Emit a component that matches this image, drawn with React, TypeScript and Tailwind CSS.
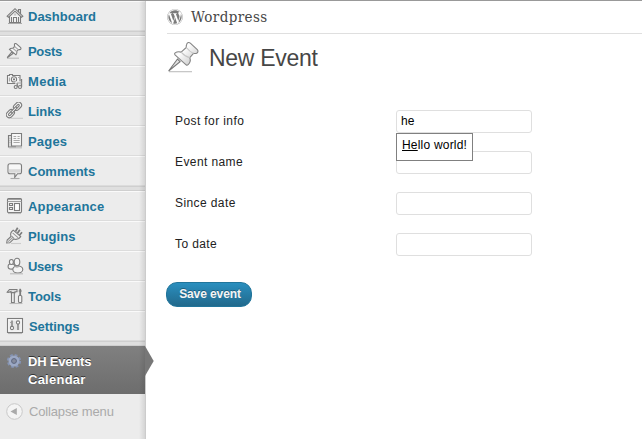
import React from "react";
import { FaWordpress } from "react-icons/fa";

type IconProps = { className?: string };

const svgProps = {
  width: 18,
  height: 18,
  viewBox: "0 0 18 18",
  fill: "none",
  stroke: "#7c7c7c",
  strokeWidth: 1.1,
};

const HomeIcon = () => (
  <svg {...svgProps}>
    <path d="M3.5 9v6.5h11V9" fill="#f6f6f6" />
    <path d="M12.5 5V2.5h2V7" fill="#ddd" />
    <path d="M1.2 9.2 9 1.7l7.8 7.5-1.3 1L9 4.2l-6.5 6z" fill="#eee" />
    <path d="M7.5 15.5v-5h3v5M5.5 10v5M12.5 10v5" />
    <path d="M9 6.5v2M2 16.5h14" stroke="#aaa" />
  </svg>
);

const PinIcon = () => (
  <svg {...svgProps}>
    <path d="M1 16.2h12" stroke="#bbb" />
    <path d="M1.2 15.7 5.7 10l1.4 1.4z" fill="#ddd" />
    <path
      d="M8.4 2.6c.2-1 1-1.4 1.8-.9l4.5 4c.6.8.2 1.8-1 1.9l-1.4.1-1.6 1.8c.5 1.3.2 2.6-.7 3.3L3.5 7.4c.8-1 2-1.3 3.3-1.1l1.8-1.8z"
      fill="#f5f5f5"
    />
    <path d="m6.8 6.3 3.9 3.2M8.6 4.5l3.7 3.2" stroke="#aaa" />
  </svg>
);

const MediaIcon = () => (
  <svg {...svgProps}>
    <path d="M1.5 3.5h2v-1h3v1h7.5v8h-12.5z" fill="#f4f4f4" />
    <path d="M3.5 5.5v4M12 5.5h1.5" stroke="#aaa" />
    <circle cx="8" cy="7.4" r="2.6" fill="#fff" />
    <circle cx="8" cy="7.4" r=".6" />
    <path d="M10.5 15.5v-5h5.5v5" fill="#ececec" stroke="#ececec" strokeWidth="2.4" />
    <path d="M11.2 15v-4M15.5 15V7" strokeWidth="1.3" />
    <path d="M11 11h4.5" stroke="#aaa" />
    <circle cx="9.7" cy="15" r="1.5" fill="#eee" />
    <circle cx="14" cy="15" r="1.5" fill="#eee" />
  </svg>
);

const LinksIcon = () => (
  <svg {...svgProps}>
    <path d="M5 16.3h12" stroke="#ccc" />
    <g transform="translate(-.8 -.8) rotate(-46 8.5 9)">
      <rect x="-.8" y="6" width="9" height="6" rx="3" fill="#f4f4f4" />
      <rect x="1.4" y="8" width="4.8" height="2" rx="1" />
      <rect x="9.5" y="6" width="9" height="6" rx="3" fill="#f4f4f4" />
      <rect x="11.3" y="8" width="4.8" height="2" rx="1" />
      <rect x="5" y="8" width="7.5" height="2" rx="1" fill="#fff" />
    </g>
  </svg>
);

const PagesIcon = () => (
  <svg {...svgProps}>
    <path d="M6 3.5H2.5v11.5H10" fill="#ddd" />
    <path d="M5.5 1.5h10v12.5h-10z" fill="#f7f7f7" />
    <path
      d="M7.5 4.5h2.7M11.5 4.5h2.2M7.5 6.5h2.7M11.5 6.5h2.2M7.5 8.5h6.2M7.5 10.5h6.2M3.5 6.5h1M3.5 8.5h1M3.5 10.5h1"
      stroke="#aaa"
    />
    <path d="M3 15.8h13" stroke="#bbb" />
  </svg>
);

const CommentIcon = () => (
  <svg {...svgProps}>
    <path
      d="M4 1.7h9.5c1.2 0 2 .9 2 2v6c0 1.2-.8 2-2 2H11.5l-2.8 3.8.2-3.8H4c-1.2 0-2-.8-2-2v-6c0-1.2.8-2 2-2z"
      fill="#f7f7f7"
    />
    <path d="M2.8 7.2h12v3.5h-12z" fill="#d8d8d8" stroke="none" />
    <path d="M4.5 16.5h9" stroke="#aaa" />
  </svg>
);

const AppearanceIcon = () => (
  <svg {...svgProps}>
    <rect x="1.5" y="1.5" width="14" height="14" rx="1" fill="#f4f4f4" />
    <path d="M2 2.5h13M1.5 4.5h14" stroke="#a0a0a0" />
    <rect x="8.5" y="6.5" width="5" height="7" fill="#fff" />
    <path d="M3.5 6.5h3v2h-3zM3.5 10.5h3v2h-3z" />
    <path d="M2 16.5h13" stroke="#bbb" />
  </svg>
);

const PluginIcon = () => (
  <svg {...svgProps}>
    <path d="M5 16.5h10" stroke="#ccc" />
    <path d="m9.5 4.5 2.2-3.7M13.3 8.5l2.7-3.2M11.5 6.3l2.3-3.6" strokeWidth="1.7" />
    <path
      d="m7.2 3.2 7.5 6.4c-1.5 2.4-4.4 3.2-7.2 2.4l-3.8 3.8L.7 16l.5-3L5 9.5c-.8-2.3.2-5 2.2-6.3z"
      fill="#f3f3f3"
    />
    <path d="m6.6 5.8 5.7 5M2.2 14.7l4.3-4M5.5 9l2.8 2.7" stroke="#999" />
  </svg>
);

const UsersIcon = () => (
  <svg {...svgProps}>
    <ellipse cx="5.4" cy="9.4" rx="3.3" ry="2.7" fill="#f4f4f4" />
    <ellipse cx="5.4" cy="5" rx="2" ry="2.5" fill="#f4f4f4" />
    <ellipse cx="11" cy="5" rx="2.8" ry="3.7" fill="#f4f4f4" />
    <ellipse cx="11.8" cy="12.5" rx="5" ry="3.5" fill="#f4f4f4" />
    <path d="M8.2 8.8c1.6 1.5 4 1.5 5.7 0" stroke="#aaa" />
    <path d="M4 16.8h13" stroke="#bbb" />
  </svg>
);

const ToolsIcon = () => (
  <svg {...svgProps}>
    <path d="M5.5 5.5h2.8v10H5.5z" fill="#eee" />
    <path d="M1.2 5.2 3.5 2.5H11v2.3H9v.8H5v-1L2 5.5z" fill="#ddd" />
    <path d="M14.2 1.8v7" strokeWidth="1.8" />
    <path d="M12.7 4h3" />
    <rect x="12.5" y="8.5" width="3.3" height="7" rx="1" fill="#f5f5f5" />
    <path d="M3.5 16.5h13" stroke="#bbb" />
  </svg>
);

const SettingsIcon = () => (
  <svg {...svgProps}>
    <rect x="1.5" y="1.5" width="15" height="14" fill="#f8f8f8" />
    <rect x="3.5" y="3.5" width="11" height="10" fill="#e6e6e6" stroke="none" />
    <path d="M6 3.5v6M12 7v6" strokeWidth="1.4" />
    <circle cx="6" cy="11" r="1.6" fill="#fff" />
    <circle cx="12" cy="5.5" r="1.6" fill="#fff" />
    <path d="M4.2 5.5h1.5" stroke="#999" />
    <path d="M2 16.5h14" stroke="#bbb" />
  </svg>
);

const GearIcon = () => (
  <svg width="18" height="18" viewBox="0 0 18 18" fill="none">
    <circle cx="8" cy="9" r="6.1" stroke="#8493b3" strokeWidth="2" strokeDasharray="2.8 1.99" />
    <circle cx="8" cy="9" r="4" stroke="#9ba8c4" strokeWidth="3" />
    <circle cx="8" cy="9" r="2.4" fill="#858b9c" stroke="#5f6a85" />
  </svg>
);

const BigPin = ({ className }: IconProps) => (
  <svg className={className} width="34" height="34" viewBox="0 0 34 34" fill="none" stroke="#858585" strokeWidth="1.1">
    <defs>
      <linearGradient id="pin" x1="0" y1="0" x2="1" y2="1">
        <stop offset="0" stopColor="#d0d0d0" />
        <stop offset=".35" stopColor="#ffffff" />
        <stop offset="1" stopColor="#bcbcbc" />
      </linearGradient>
    </defs>
    <path d="M2 30.7h23" stroke="#bdbdbd" />
    <path d="M1.6 30 10.5 18l2.6 2.6z" fill="#e2e2e2" stroke="#777" />
    <path
      d="M19.7 3.2c.6-1.8 2.3-2.2 3.6-1.1l7 6.5c1.2 1.2.7 3-.6 3.6-1.1.5-2.3.3-3.2.2l-3.7 4.3c.9 2.2.1 5.2-1.7 7-.7.6-1.4.6-2 .1L8 13.9c-.6-.7-.6-1.4.1-2 1.9-1.4 4-1.4 6-.8l5.2-4.6c-.2-1.200 0-2.200.4-3.300z"
      fill="url(#pin)"
    />
    <path d="M19.3 6.500c1.900 2.400 4.400 4.700 7.200 5.900M14.100 11.100c2.200 2.500 5.400 4.800 8.700 5.600" stroke="#c5c5c5" />
  </svg>
);

type Item = { label: string; Icon: React.FC; text?: string };

const content: Item[] = [
  { label: "Posts", Icon: PinIcon, text: "tracking-[-0.3px]" },
  { label: "Media", Icon: MediaIcon, text: "tracking-[0.3px]" },
  { label: "Links", Icon: LinksIcon, text: "tracking-[-0.1px]" },
  { label: "Pages", Icon: PagesIcon, text: "tracking-[0.2px]" },
  { label: "Comments", Icon: CommentIcon },
];

const admin: Item[] = [
  { label: "Appearance", Icon: AppearanceIcon, text: "tracking-[0.2px]" },
  { label: "Plugins", Icon: PluginIcon, text: "tracking-[0.1px]" },
  { label: "Users", Icon: UsersIcon, text: "tracking-[-0.3px]" },
  { label: "Tools", Icon: ToolsIcon, text: "tracking-[-0.1px]" },
  { label: "Settings", Icon: SettingsIcon, text: "pl-px tracking-[-0.1px]" },
];

const MenuItem = ({ label, Icon, text = "" }: Item) => (
  <li className="flex h-[30px] items-center border-t border-b border-t-[#fafafa] border-b-[#dcdcdc] pl-1.5">
    <span className="w-[22px] shrink-0">
      <Icon />
    </span>
    <span className={`pt-px text-[13px] leading-[18px] font-bold text-[#21759b] ${text}`}>{label}</span>
  </li>
);

const Separator = () => <li className="h-[5px] border-t border-b border-[#cfcfcf] bg-[#dfdfdf]" />;

const fields = ["Post for info", "Event name", "Since date", "To date"];

export default function App() {
  return (
    <div className="flex h-[439px] w-[642px] overflow-hidden border-t border-[#999] bg-white font-['Liberation_Sans',Arial,sans-serif]">
      <nav className="relative w-[146px] shrink-0 border-r border-[#ccc] bg-[#ececec]">
        <ul>
          <MenuItem label="Dashboard" Icon={HomeIcon} />
          <Separator />
          {content.map((item) => (
            <MenuItem key={item.label} {...item} />
          ))}
          <Separator />
          {admin.map((item) => (
            <MenuItem key={item.label} {...item} />
          ))}
          <Separator />
          <li className="relative flex h-12 bg-linear-to-b from-[#808080] to-[#6d6d6d] pt-[7px] pl-1.5">
            <span className="-mt-px w-[22px] shrink-0">
              <GearIcon />
            </span>
            <span className="text-[13px] leading-[18px] font-bold text-white [text-shadow:0_-1px_0_#333]">
              <span className="tracking-[-0.2px]">DH Events</span>
              <br />
              <span className="tracking-[0.25px]">Calendar</span>
            </span>
            <svg className="absolute top-0 left-[145px]" width="10" height="30" viewBox="0 0 10 30">
              <path d="M0 0 8.700 15 0 30z" fill="#777" />
            </svg>
          </li>
        </ul>
        <div className="flex items-center pt-[7px] pl-1.5">
          <svg width="17" height="17" viewBox="0 0 17 17" fill="none">
            <circle cx="8.5" cy="8.5" r="7.8" fill="#f4f4f4" stroke="#c8c8c8" />
            <path d="M4.500 8.500 10.800 4.900v7.200z" fill="#aaa" />
          </svg>
          <span className="pt-0.5 pl-1.5 text-[13px] leading-[18px] tracking-[-0.15px] text-[#aaa]">Collapse menu</span>
        </div>
        <div className="pointer-events-none absolute inset-y-0 right-0 w-1.5 bg-linear-to-r from-transparent to-black/10" />
      </nav>

      <main className="flex-1 pl-[21px]">
        <header className="flex h-[33px] items-center border-b border-[#dfdfdf]">
          <FaWordpress className="size-4 text-[#7c7c7c]" />
          <h1 className="pl-2 font-['DejaVu_Serif_Condensed','DejaVu_Serif',serif] text-[15px] leading-5 tracking-[0.4px] text-[#464646]">
            Wordpress
          </h1>
        </header>
        <div className="flex h-12 items-center">
          <BigPin className="shrink-0" />
          <h2 className="pl-2 text-[23px] leading-7 tracking-[-0.3px] text-[#464646]">New Event</h2>
        </div>
        <form className="pt-7">
          {fields.map((label, i) => (
            <div key={label} className="flex h-[41px] items-start pl-2">
              <label className="w-[221px] pt-0.5 text-[12px] leading-[18px] tracking-[0.4px] text-[#222]">{label}</label>
              <div className="relative h-[23px] w-[136px] rounded-[3px] border border-[#dfdfdf] bg-white px-1 text-[12px] leading-[21px] tracking-[0.2px] text-black">
                {i === 0 && (
                  <>
                    he
                    <div className="absolute top-[22px] -left-px z-10 h-7 w-[77px] border border-[#808080] bg-white pl-[5px] leading-[22px] whitespace-nowrap">
                      <u>He</u>llo world!
                    </div>
                  </>
                )}
              </div>
            </div>
          ))}
          <button
            type="button"
            className="mt-2 -ml-px block h-[25px] w-[86px] rounded-[11px] border border-[#21759b] bg-linear-to-b from-[#2a8fbf] to-[#21698c] pl-0.5 text-[12px] leading-[23px] font-bold tracking-[-0.1px] text-[#f4f4f4] [text-shadow:0_-1px_0_rgba(0,0,0,.3)]"
          >
            Save event
          </button>
        </form>
      </main>
    </div>
  );
}
